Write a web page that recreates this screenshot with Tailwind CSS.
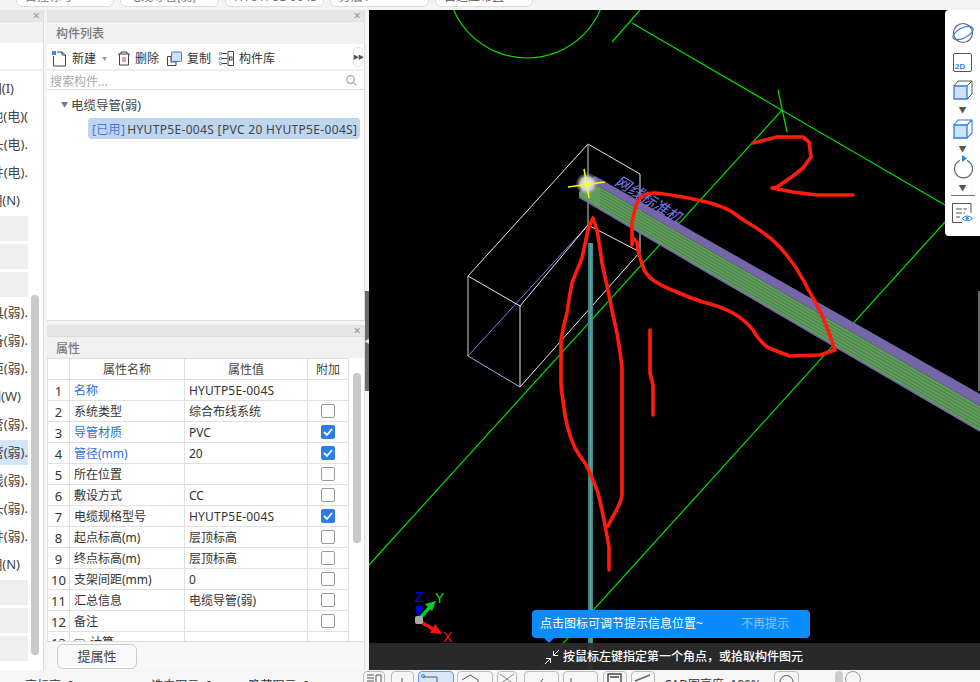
<!DOCTYPE html>
<html lang="zh">
<head>
<meta charset="utf-8">
<script src="https://cdn.jsdelivr.net/npm/@tailwindcss/browser@4"></script>
</head>
<body class="w-[980px] h-[682px] overflow-hidden bg-[#f4f4f4] text-[12px] text-[#333] font-['Noto_Sans','Noto_Sans_CJK_SC',sans-serif]">
<div class="flex flex-col h-full">

  <!-- top inputs, cut by the window -->
  <div class="h-[10px] overflow-hidden flex gap-[6px] shrink-0 pl-[16px]">
    <div class="w-[98px] h-[17px] -mt-[10px] bg-white border border-[#ddd] rounded-md px-2 leading-[11px] text-[#777] whitespace-nowrap overflow-hidden">自控标号</div>
    <div class="w-[99px] h-[17px] -mt-[10px] bg-white border border-[#ddd] rounded-md px-2 leading-[11px] text-[#777] whitespace-nowrap overflow-hidden">电缆导管(弱)</div>
    <div class="w-[99px] h-[17px] -mt-[10px] bg-white border border-[#ddd] rounded-md px-2 leading-[11px] text-[#777] whitespace-nowrap overflow-hidden">HYUTP5E-004S</div>
    <div class="w-[99px] h-[17px] -mt-[10px] bg-white border border-[#ddd] rounded-md px-2 leading-[11px] text-[#777] whitespace-nowrap overflow-hidden">分层1</div>
    <div class="w-[98px] h-[17px] -mt-[10px] bg-white border border-[#ddd] rounded-md px-2 leading-[11px] text-[#555] whitespace-nowrap overflow-hidden">自适应布置</div>
  </div>

  <div class="flex flex-1 min-h-0">
    <!-- left cut panel -->
    <div class="relative w-[44px] shrink-0 flex flex-col border-r border-[#ddd] bg-white overflow-hidden">
      <div class="h-[12px] bg-[#e6e6e6] border-b border-[#ddd] flex items-center justify-end pr-[3px] text-[#999] text-[13px] leading-none">×</div>
      <div class="h-[21px] bg-[#f1f1f1]"></div>
      <div class="h-[28px] border-b-2 border-[#eee]"></div>
      <div class="pt-[3px] w-[28px] overflow-hidden flex flex-col text-[#444] text-[13px]">
        <div class="h-[28px] pt-[2px] pr-[14px] flex items-center justify-end whitespace-nowrap">明(I)</div>
        <div class="h-[28px] pt-[2px] flex items-center justify-end whitespace-nowrap">地(电)(</div>
        <div class="h-[28px] pt-[2px] flex items-center justify-end whitespace-nowrap">头(电).</div>
        <div class="h-[28px] pt-[2px] flex items-center justify-end whitespace-nowrap">井(电).</div>
        <div class="h-[28px] pt-[2px] pr-[8px] flex items-center justify-end whitespace-nowrap">明(N)</div>
        <div class="h-[28px] py-[1.5px]"><div class="h-full bg-[#efefef]"></div></div>
        <div class="h-[28px] py-[1.5px]"><div class="h-full bg-[#efefef]"></div></div>
        <div class="h-[28px] py-[1.5px]"><div class="h-full bg-[#efefef]"></div></div>
        <div class="h-[28px] pt-[2px] flex items-center justify-end whitespace-nowrap">具(弱).</div>
        <div class="h-[28px] pt-[2px] flex items-center justify-end whitespace-nowrap">备(弱).</div>
        <div class="h-[28px] pt-[2px] flex items-center justify-end whitespace-nowrap">柜(弱).</div>
        <div class="h-[28px] pt-[2px] pr-[7px] flex items-center justify-end whitespace-nowrap">明(W)</div>
        <div class="h-[28px] pt-[2px] flex items-center justify-end whitespace-nowrap">管(弱).</div>
        <div class="h-[28px] py-[1.5px]"><div class="h-full pt-[2px] bg-[#d2e5fb] flex items-center justify-end whitespace-nowrap">管(弱).</div></div>
        <div class="h-[28px] pt-[2px] flex items-center justify-end whitespace-nowrap">线(弱).</div>
        <div class="h-[28px] pt-[2px] flex items-center justify-end whitespace-nowrap">头(弱).</div>
        <div class="h-[28px] pt-[2px] flex items-center justify-end whitespace-nowrap">井(弱).</div>
        <div class="h-[28px] pt-[2px] pr-[8px] flex items-center justify-end whitespace-nowrap">明(N)</div>
        <div class="h-[28px] py-[1.5px]"><div class="h-full bg-[#efefef]"></div></div>
        <div class="h-[28px] py-[1.5px]"><div class="h-full bg-[#efefef]"></div></div>
        <div class="h-[28px] py-[1.5px]"><div class="h-full bg-[#efefef]"></div></div>
      </div>
      <div class="absolute left-[31px] top-[285px] w-[8px] h-[360px] rounded bg-[#c9c9c9]"></div>
    </div>

    <!-- middle -->
    <div class="w-[318px] ml-[3px] shrink-0 flex flex-col">
      <!-- component list -->
      <div class="h-[311px] flex flex-col bg-white border-r border-b border-[#ddd]">
        <div class="h-[12px] bg-[#e6e6e6] border-b border-[#ddd] flex items-center justify-end pr-[3px] text-[#999] text-[13px] leading-none shrink-0">×</div>
        <div class="h-[22px] pt-[2px] bg-[#f1f1f1] flex items-center pl-[9px] text-[#7a7a7a] font-medium shrink-0">构件列表</div>
        <div class="h-[27px] pt-[4px] flex items-center border-b-2 border-[#eee] pl-[5px] shrink-0 relative">
          <svg class="w-[15px] h-[16px]" viewBox="0 0 15 16" fill="none"><path d="M1.500 5V15H13.500V4L10 1H5" stroke="#444"/><path d="M10 1V4H13.500" stroke="#444"/><path d="M0 0h4v4H0z" fill="#3a8ae8"/></svg>
          <span class="ml-[5px]">新建</span>
          <span class="ml-[6px] text-[#999] text-[5px]">▼</span>
          <svg class="ml-[10px] w-[14px] h-[15px]" viewBox="0 0 14 15" fill="none"><path d="M1 3H13M4 3V1H10V3M2.500 3V14H11.500V3" stroke="#444"/><path d="M6 6V11M8 6V11" stroke="#e33"/></svg>
          <span class="ml-[4px]">删除</span>
          <svg class="ml-[8px] w-[15px] h-[15px]" viewBox="0 0 15 15" fill="none"><path d="M.5 5.500H4V11H9V14.500H.5Z" stroke="#444"/><rect x="4.500" y="1" width="10" height="9.500" rx="1" fill="#cfe2fa" stroke="#2b7de9"/></svg>
          <span class="ml-[5px]">复制</span>
          <svg class="ml-[8px] w-[15px] h-[15px]" viewBox="0 0 15 15" fill="none"><path d="M9 .5H14.500V14.500H9Z" stroke="#444"/><rect x="10.500" y="6" width="2.500" height="3" stroke="#444"/><path d="M3 2.500H8M3 7.500H8M3 12.500H8" stroke="#444"/><circle cx="1.500" cy="2.500" r="1.200" stroke="#2b7de9"/><circle cx="1.500" cy="7.500" r="1.200" stroke="#2b7de9"/><circle cx="1.500" cy="12.500" r="1.200" stroke="#2b7de9"/></svg>
          <span class="ml-[5px]">构件库</span>
          <div class="absolute left-[306px] top-[3px] w-[10px] h-[20px] border border-[#e5e5e5] rounded-sm flex items-center justify-center text-[#555] text-[6px] tracking-[-1px]">▶▶</div>
        </div>
        <div class="h-[19px] pt-[4px] flex items-center justify-between border-b border-[#ddd] pl-[3px] pr-[7px] text-[#aaa] shrink-0">
          <span>搜索构件...</span>
          <svg class="w-[11px] h-[11px] -mt-[3px]" viewBox="0 0 11 11" fill="none"><circle cx="4.500" cy="4.500" r="3.800" stroke="#aaa" stroke-width="1.300"/><path d="M7.500 7.500L10.500 10.500" stroke="#aaa" stroke-width="1.300"/></svg>
        </div>
        <div class="pt-[5px] pl-[14px] text-[#444]">
          <div class="flex items-center h-[20px]">
            <span class="text-[#777] text-[7px] w-[10px]">▼</span>
            <span class="pt-[2px] text-[12.500px]">电缆导管(弱)</span>
          </div>
          <div class="mt-[3px] ml-[27px] w-[272px] h-[21px] rounded-sm bg-[#bfd6ef] pl-[4px] pt-[2px] flex items-center whitespace-nowrap tracking-[0.33px]">
            <span class="text-[#3f78e0]">[已用]</span>
            <span class="ml-[2px]">HYUTP5E-004S [PVC 20 HYUTP5E-004S]</span>
          </div>
        </div>
      </div>

      <!-- properties -->
      <div class="mt-[4px] flex-1 min-h-0 flex flex-col bg-[#f8f8f8] border-r border-[#ddd]">
        <div class="h-[12px] bg-[#e6e6e6] border-b border-[#ddd] flex items-center justify-end pr-[3px] text-[#999] text-[13px] leading-none shrink-0">×</div>
        <div class="h-[21px] pt-[2px] bg-[#f1f1f1] flex items-center pl-[9px] text-[#7a7a7a] font-medium shrink-0">属性</div>
        <div class="relative h-[284px] overflow-hidden bg-white border-b border-[#ddd] shrink-0">
          <table class="table-fixed border-collapse w-[301px] [&_td]:border [&_td]:border-[#e0e0e0] [&_td]:h-[21px] [&_td]:p-0 [&_td]:pt-[2px] [&_td]:leading-[18px] [&_td]:whitespace-nowrap [&_td:has(>div)]:!pt-0">
            <colgroup><col class="w-[22px]"><col class="w-[115px]"><col class="w-[123px]"><col class="w-[41px]"></colgroup>
            <tr class="text-[#444] text-center"><td></td><td>属性名称</td><td>属性值</td><td>附加</td></tr>
            <tr><td class="text-center text-[13px]">1</td><td class="!pl-[4px] text-[#2a6de0]">名称</td><td class="!pl-[4px] tracking-[0.19px]">HYUTP5E-004S</td><td></td></tr>
            <tr><td class="text-center text-[13px]">2</td><td class="!pl-[4px]">系统类型</td><td class="!pl-[4px]">综合布线系统</td><td><div class="mx-auto w-[14px] h-[14px] border border-[#999] rounded-[2px]"></div></td></tr>
            <tr><td class="text-center text-[13px]">3</td><td class="!pl-[4px] text-[#2a6de0]">导管材质</td><td class="!pl-[4px]">PVC</td><td><div class="mx-auto w-[14px] h-[14px] bg-[#2b7de9] rounded-[2px] flex items-center justify-center"><svg class="w-[10px] h-[10px]" viewBox="0 0 10 10" fill="none"><path d="M1 5L4 8L9 2" stroke="#fff" stroke-width="1.800"/></svg></div></td></tr>
            <tr><td class="text-center text-[13px]">4</td><td class="!pl-[4px] text-[#2a6de0]">管径(mm)</td><td class="!pl-[4px]">20</td><td><div class="mx-auto w-[14px] h-[14px] bg-[#2b7de9] rounded-[2px] flex items-center justify-center"><svg class="w-[10px] h-[10px]" viewBox="0 0 10 10" fill="none"><path d="M1 5L4 8L9 2" stroke="#fff" stroke-width="1.800"/></svg></div></td></tr>
            <tr><td class="text-center text-[13px]">5</td><td class="!pl-[4px]">所在位置</td><td class="!pl-[4px]"></td><td><div class="mx-auto w-[14px] h-[14px] border border-[#999] rounded-[2px]"></div></td></tr>
            <tr><td class="text-center text-[13px]">6</td><td class="!pl-[4px]">敷设方式</td><td class="!pl-[4px]">CC</td><td><div class="mx-auto w-[14px] h-[14px] border border-[#999] rounded-[2px]"></div></td></tr>
            <tr><td class="text-center text-[13px]">7</td><td class="!pl-[4px]">电缆规格型号</td><td class="!pl-[4px] tracking-[0.19px]">HYUTP5E-004S</td><td><div class="mx-auto w-[14px] h-[14px] bg-[#2b7de9] rounded-[2px] flex items-center justify-center"><svg class="w-[10px] h-[10px]" viewBox="0 0 10 10" fill="none"><path d="M1 5L4 8L9 2" stroke="#fff" stroke-width="1.800"/></svg></div></td></tr>
            <tr><td class="text-center text-[13px]">8</td><td class="!pl-[4px]">起点标高(m)</td><td class="!pl-[4px]">层顶标高</td><td><div class="mx-auto w-[14px] h-[14px] border border-[#999] rounded-[2px]"></div></td></tr>
            <tr><td class="text-center text-[13px]">9</td><td class="!pl-[4px]">终点标高(m)</td><td class="!pl-[4px]">层顶标高</td><td><div class="mx-auto w-[14px] h-[14px] border border-[#999] rounded-[2px]"></div></td></tr>
            <tr><td class="text-center text-[13px]">10</td><td class="!pl-[4px]">支架间距(mm)</td><td class="!pl-[4px]">0</td><td><div class="mx-auto w-[14px] h-[14px] border border-[#999] rounded-[2px]"></div></td></tr>
            <tr><td class="text-center text-[13px]">11</td><td class="!pl-[4px]">汇总信息</td><td class="!pl-[4px]">电缆导管(弱)</td><td><div class="mx-auto w-[14px] h-[14px] border border-[#999] rounded-[2px]"></div></td></tr>
            <tr><td class="text-center text-[13px]">12</td><td class="!pl-[4px]">备注</td><td class="!pl-[4px]"></td><td><div class="mx-auto w-[14px] h-[14px] border border-[#999] rounded-[2px]"></div></td></tr>
            <tr><td class="text-center text-[13px]">13</td><td class="!pl-[4px]"><span class="inline-block w-[11px] h-[11px] border border-[#888] rounded-[2px] leading-[8px] text-center mr-[5px] align-[-1px]">+</span>计算</td><td></td><td></td></tr>
          </table>
          <div class="absolute left-[306px] top-[15px] w-[8px] h-[170px] rounded bg-[#c9c9c9]"></div>
        </div>
        <div class="pt-[2px] pl-[10px]">
          <div class="w-[80px] h-[25px] pt-[1px] border border-[#ccc] rounded-md bg-[#fafafa] flex items-center justify-center text-[13px] text-[#444]">提属性</div>
        </div>
      </div>
    </div>

    <div class="relative w-[4px] shrink-0">
      <div class="absolute left-0 top-[281px] w-[4px] h-[100px] bg-[#6b6b6b] flex items-center justify-center text-[#ddd] text-[6px]">◀</div>
    </div>

    <!-- canvas -->
    <div class="relative flex-1 bg-black overflow-hidden">
      <svg class="absolute left-0 top-0" width="611" height="660" viewBox="369 10 611 660" fill="none">
        <!-- construction lines -->
        <g stroke="#00e000" stroke-width="1.200">
          <circle cx="527" cy="-22" r="80"/>
          <path d="M640 10L612 42"/>
          <path d="M632 23L945 205"/>
          <path d="M782 110L369 565"/>
          <path d="M778 90L787 132"/>
          <path d="M945 222L539 670"/>
        </g>
        <!-- wire box -->
        <g stroke-width="1">
          <path d="M468 356L588 225" stroke="#7c7ce0"/>
          <path d="M468 356L520 387" stroke="#a8a8ee"/>
          <path d="M588 144L640 174M588 144L468 276M468 276L520 306M520 306L588 225M520 306V387M520 387L640 252M588 225L640 252M640 174V252" stroke="#e8e8e8"/>
          <path d="M468 276V356M588 144V225" stroke="#a0a0a0" stroke-width="1.300"/>
        </g>
        <!-- vertical pipe -->
        <rect x="588" y="243" width="5" height="427" fill="#3d8888"/>
        <rect x="590" y="243" width="1.500" height="427" fill="#5aa3a3"/>
        <!-- sloped pipe -->
        <path d="M579 192L595 176L980 394V406L598 186Z" fill="#7565a9"/>
        <path d="M579 192L598 186L980 406V431L700 268L579 197Z" fill="#5f9c5c"/>
        <g stroke="#3f7040" stroke-width=".7">
          <path d="M600 190L980 409.600"/>
          <path d="M600 193.300L980 413.100"/>
          <path d="M600 196.400L980 416.700"/>
          <path d="M600 199.600L980 420.300"/>
          <path d="M600 202.700L980 423.900"/>
          <path d="M600 205.900L980 427.400"/>
        </g>
        <path d="M579 197L700 268L980 431" stroke="#7565a9" stroke-width="1.500"/>
        <text transform="translate(614 184) rotate(32) skewX(-14)" fill="#7d78e8" font-size="15" font-family="Noto Sans CJK SC">网线标准机</text>
        <!-- snap point -->
        <defs><radialGradient id="glow"><stop offset="0" stop-color="#f4f4f4"/><stop offset=".6" stop-color="#ccc"/><stop offset="1" stop-color="#888" stop-opacity=".2"/></radialGradient></defs>
        <circle cx="587" cy="184" r="11" fill="url(#glow)"/>
        <path d="M568 187L605 182M584 169L589 198" stroke="#ffff00" stroke-width="1.500"/>
        <!-- red marks -->
        <g stroke="#ff1c0c" stroke-width="3.600" stroke-linecap="round" stroke-linejoin="round">
          <polyline points="753,143 777,137 803,137 809,142 811,157 803,168 793,176 777,187 772,188 793,192 817,195 853,195"/>
          <path d="M632 245L632 223Q635 207 637.500 202Q640 197 644 195Q648 193 654 193Q660 193 680 196.500Q700 200 713.500 204Q727 208 735 214Q743 220 750 224Q757 228 767 235.500Q777 243 787 255.500Q797 268 803.500 280.500Q810 293 815 301.500Q820 310 825 322.500Q830 335 835 350L820 355L790 356Q778 352 767 347Q757 338 753 330Q745 320 733 313Q720 306 703 302Q690 298 677 292Q663 287 653 280Q646 275 643 267Q640 258 638 250L637 242L633 238"/>
          <polyline points="650,330 650,373 653,385 653,415"/>
          <path d="M609 570L609 547Q607 536 605 525Q602 509 598 493Q592 476 585 463Q579 455 575 448Q570 437 567 425Q564 412 563 400Q561 392 561 383L561 340Q563 327 567 313Q569 298 572 283Q577 270 582 258Q585 244 588 230Q590 224 593 218Q595 224 597 230Q600 247 602 263Q605 277 608 290Q612 311 617 333Q620 350 622 367L622 495Q621 501 618 507Q615 513 612 518L608 526"/>
        </g>
        <!-- axis -->
        <path d="M419 620L419 606" stroke="#0000e0" stroke-width="3"/>
        <circle cx="419" cy="609" r="3.500" fill="#0000e0"/>
        <path d="M420 618L430 607" stroke="#00d020" stroke-width="3.500"/>
        <path d="M436 601L425 604L432 611Z" fill="#00d020"/>
        <path d="M421 622L433 629" stroke="#ff1010" stroke-width="3.500"/>
        <path d="M442 634L430 633L435 624Z" fill="#ff1010"/>
        <rect x="415" y="616" width="8" height="8" rx="2" fill="#aaa"/>
        <text x="415" y="602" fill="#0000ff" font-size="14" font-family="Liberation Sans">Z</text>
        <text x="435" y="603" fill="#00e020" font-size="14" font-family="Liberation Sans">Y</text>
        <text x="443" y="642" fill="#ff1010" font-size="14" font-family="Liberation Sans">X</text>
      </svg>

      <!-- view toolbar -->
      <div class="absolute right-0 top-0 w-[35px] h-[226px] bg-white rounded-l-sm flex flex-col items-center">
        <svg class="mt-[12px] w-[22px] h-[22px]" viewBox="0 0 22 22" fill="none"><circle cx="11" cy="11" r="9.500" stroke="#666" stroke-width="1.200"/><ellipse cx="11" cy="11" rx="11" ry="5" transform="rotate(-27 11 11)" stroke="#2b7de9" stroke-width="1.200"/></svg>
        <svg class="mt-[9px] w-[19px] h-[19px]" viewBox="0 0 19 19" fill="none"><rect x=".5" y=".5" width="18" height="18" rx="1.500" stroke="#555"/><text x="2" y="16" fill="#2b7de9" font-size="8" font-weight="700" font-family="Liberation Sans">2D</text></svg>
        <svg class="mt-[8px] w-[20px] h-[20px]" viewBox="0 0 20 20" fill="none"><path d="M1 6H14V19H1Z" fill="#cfe2fa" stroke="#2b7de9" stroke-width="1.300"/><path d="M1 6L5 1H19V14L14 19M14 6L19 1" stroke="#555"/></svg>
        <span class="mt-[5px] h-[9px] text-[#555] text-[8px] leading-[9px]">▼</span>
        <svg class="mt-[5px] w-[20px] h-[20px]" viewBox="0 0 20 20" fill="none"><path d="M1 6H14V19H1Z" fill="#cfe2fa" stroke="#2b7de9" stroke-width="1.300"/><path d="M1 6L5 1H19V14L14 19M14 6L19 1" stroke="#2b7de9" stroke-width="1.100"/></svg>
        <span class="mt-[5px] h-[9px] text-[#555] text-[8px] leading-[9px]">▼</span>
        <svg class="mt-[2px] w-[20px] h-[24px]" viewBox="0 0 20 24" fill="none"><path d="M7 5.500A9 9 0 1 0 14 5.500" stroke="#666" stroke-width="1.200"/><path d="M9 0L14 3.500L9 7Z" fill="#2b7de9"/></svg>
        <span class="mt-[4px] h-[9px] text-[#555] text-[8px] leading-[9px]">▼</span>
        <div class="mt-[3px] w-[24px] h-px bg-[#777]"></div>
        <svg class="mt-[7px] w-[21px] h-[20px]" viewBox="0 0 21 20" fill="none"><path d="M10 19.500H.5V.5H19V10" stroke="#555"/><path d="M4 6H15M4 10H13M4 14H8" stroke="#555" stroke-dasharray="6 1.500"/><path d="M10 15.500Q15 10.500 20.500 15.500Q15 20 10 15.500Z" stroke="#2b7de9"/><circle cx="15.200" cy="15.300" r="1.500" fill="#2b7de9"/></svg>
      </div>
      <div class="absolute right-0 top-[281px] w-[2px] h-[100px] bg-[#666]"></div>

      <!-- hint bar -->
      <div class="absolute left-0 right-0 bottom-0 h-[27px] bg-[#2b2b2b]/95 flex items-center pl-[175px]">
        <svg class="w-[16px] h-[16px]" viewBox="0 0 16 16" fill="none"><path d="M15 1L9.500 6.500M9.500 2V6.500H14M1 15L6.500 9.500M2 9.500H6.500V14" stroke="#fff"/></svg>
        <span class="ml-[3px] text-white font-medium">按鼠标左键指定第一个角点，或拾取构件图元</span>
      </div>
      <div class="absolute left-[163px] top-[600px] w-[278px] h-[28px] rounded-sm bg-[#0a8cff] flex items-center pl-[8px] text-[12px] text-white">
        <span>点击图标可调节提示信息位置~</span>
        <span class="ml-[38px] text-white/50">不再提示</span>
      </div>
      <div class="absolute left-[175px] top-[628px] w-0 h-0 border-x-[5px] border-x-transparent border-t-[5px] border-t-[#0a8cff]"></div>
    </div>
  </div>

  <!-- status bar, cut by the window -->
  <div class="h-[12px] shrink-0 overflow-hidden flex bg-[#f6f6f6] text-[#333]">
    <div class="w-[362px] flex shrink-0 pt-[7px] whitespace-nowrap leading-[18px]">
      <span class="ml-[25px]">高标高: 0</span>
      <span class="ml-[77px]">选中图元: 0</span>
      <span class="ml-[36px]">隐藏图元: 0</span>
    </div>
    <div class="flex pt-[1px] items-start">
      <div class="ml-[1px] w-[22px] h-[20px] border border-[#bbb] rounded-sm"><svg class="w-[20px] h-[12px]" viewBox="0 0 20 12" fill="none"><path d="M3 3H10M3 6H10M3 9H10M12 3H17V12M12 3V12" stroke="#555"/></svg></div>
      <div class="ml-[6px] w-[23px] h-[20px] border border-[#bbb] rounded-sm"><svg class="w-[21px] h-[12px]" viewBox="0 0 21 12" fill="none"><path d="M10 6V12" stroke="#555"/></svg></div>
      <div class="ml-[4px] w-[36px] h-[20px] border border-[#5d9be8] rounded-sm bg-[#d8e7fa]"><svg class="w-[34px] h-[12px]" viewBox="0 0 34 12" fill="none"><path d="M4 5H18V12" stroke="#555"/><circle cx="4" cy="4" r="1.500" stroke="#2b7de9"/></svg></div>
      <div class="ml-[3px] w-[36px] h-[20px] border border-[#bbb] rounded-sm"><svg class="w-[34px] h-[12px]" viewBox="0 0 34 12" fill="none"><path d="M4 8L12 3L20 8V12" stroke="#555"/></svg></div>
      <div class="ml-[4px] w-[20px] h-[20px] border border-[#bbb] rounded-sm"><svg class="w-[18px] h-[12px]" viewBox="0 0 18 12" fill="none"><path d="M2 2L16 12M16 2L2 12" stroke="#888"/></svg></div>
      <div class="ml-[7px] w-[35px] h-[20px] border border-[#bbb] rounded-sm"><svg class="w-[33px] h-[12px]" viewBox="0 0 33 12" fill="none"><path d="M14 12L18 7" stroke="#555"/></svg></div>
      <div class="ml-[4px] w-[35px] h-[20px] border border-[#bbb] rounded-sm"><svg class="w-[33px] h-[12px]" viewBox="0 0 33 12" fill="none"><path d="M7 6V12" stroke="#555"/></svg></div>
      <div class="ml-[5px] w-[24px] h-[20px] border border-[#bbb] rounded-sm"><svg class="w-[22px] h-[12px]" viewBox="0 0 22 12" fill="none"><path d="M4 12V2H17V12M6 5H15" stroke="#444" stroke-width="1.400"/></svg></div>
      <div class="ml-[4px] w-[24px] h-[20px] border border-[#bbb] rounded-sm"><svg class="w-[22px] h-[12px]" viewBox="0 0 22 12" fill="none"><path d="M3 9L18 3" stroke="#666" stroke-width="1.400"/></svg></div>
      <span class="ml-[9px] w-[101px] pt-[5px] leading-[18px] whitespace-nowrap">CAD图亮度: 100%</span>
      <div class="ml-[9px] w-[25px] h-[20px] border border-[#bbb] rounded-sm"><svg class="w-[23px] h-[12px]" viewBox="0 0 23 12" fill="none"><circle cx="11.500" cy="10" r="6.500" stroke="#555"/></svg></div>
      <div class="ml-[36px] w-[8px] h-[14px] rounded-sm bg-[#ccc]"></div>
      <div class="ml-[2px] w-[16px] h-[16px] rounded-full border border-[#999]"></div>
    </div>
  </div>
</div>
</body>
</html>
